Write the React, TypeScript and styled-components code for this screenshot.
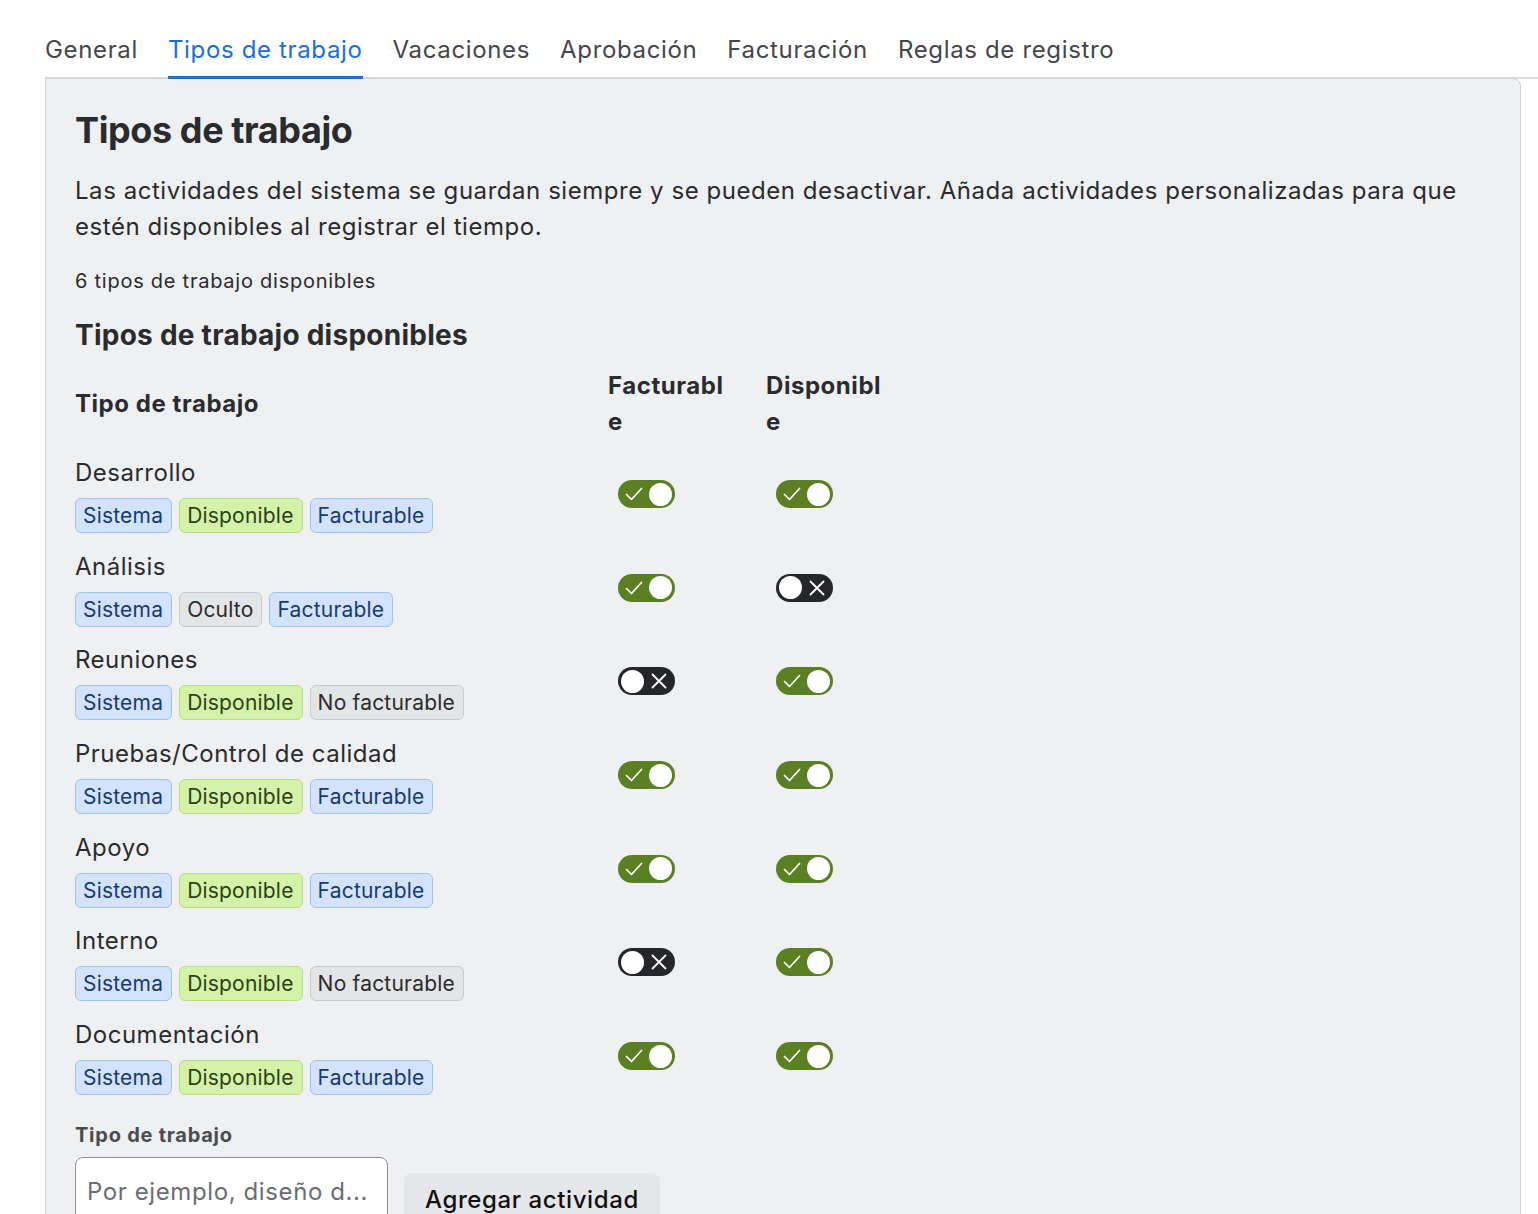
import styled, { createGlobalStyle } from "styled-components";

const GlobalStyle = createGlobalStyle`
    body {
        margin: 0;
        background: #ffffff;
        font-family: Inter, "Noto Sans", sans-serif;
        color: #2a2b2e;
    }
`

type TagKind = 'blue' | 'green' | 'gray'

interface WorkType {
    name: string
    visible: boolean
    billable: boolean
}

const workTypes: WorkType[] = [
    {name: 'Desarrollo', visible: true, billable: true},
    {name: 'Análisis', visible: false, billable: true},
    {name: 'Reuniones', visible: true, billable: false},
    {name: 'Pruebas/Control de calidad', visible: true, billable: true},
    {name: 'Apoyo', visible: true, billable: true},
    {name: 'Interno', visible: true, billable: false},
    {name: 'Documentación', visible: true, billable: true},
]

const tabs = ['General', 'Tipos de trabajo', 'Vacaciones', 'Aprobación', 'Facturación', 'Reglas de registro']

const Toggle = ({on}: { on: boolean }) => (
    <ToggleTrack $on={on}>
        {on ? (
            <>
                <svg width="20" height="20" viewBox="0 0 20 20">
                    <path d="M2.5 10.5 L7.5 15.5 L17.5 4.5" fill="none" stroke="#fff" strokeWidth="1.7"
                          strokeLinecap="round" strokeLinejoin="round"/>
                </svg>
                <Knob/>
            </>
        ) : (
            <>
                <Knob/>
                <svg width="18" height="18" viewBox="0 0 18 18">
                    <path d="M2.5 2.5 L15.5 15.5 M15.5 2.5 L2.5 15.5" fill="none" stroke="#fff"
                          strokeWidth="1.8" strokeLinecap="round"/>
                </svg>
            </>
        )}
    </ToggleTrack>
)

export default function App() {
    return (
        <Page>
            <GlobalStyle/>
            <TabList>
                {tabs.map((t, i) => (
                    <Tab key={t} $active={i === 1}>{t}</Tab>
                ))}
            </TabList>
            <Panel>
                <Title>Tipos de trabajo</Title>
                <Lead>Las actividades del sistema se guardan siempre y se pueden desactivar. Añada actividades
                    personalizadas para que estén disponibles al registrar el tiempo.</Lead>
                <Count>6 tipos de trabajo disponibles</Count>
                <SubTitle>Tipos de trabajo disponibles</SubTitle>
                <Table>
                    <thead>
                    <tr>
                        <NameHead>Tipo de trabajo</NameHead>
                        <FlagHead>Facturable</FlagHead>
                        <FlagHead>Disponible</FlagHead>
                    </tr>
                    </thead>
                    <tbody>
                    {workTypes.map(w => (
                        <tr key={w.name}>
                            <NameCell>
                                <TypeName>{w.name}</TypeName>
                                <TagRow>
                                    <Tag $kind="blue">Sistema</Tag>
                                    {w.visible
                                        ? <Tag $kind="green">Disponible</Tag>
                                        : <Tag $kind="gray">Oculto</Tag>}
                                    {w.billable
                                        ? <Tag $kind="blue">Facturable</Tag>
                                        : <Tag $kind="gray">No facturable</Tag>}
                                </TagRow>
                            </NameCell>
                            <FlagCell><Toggle on={w.billable}/></FlagCell>
                            <FlagCell><Toggle on={w.visible}/></FlagCell>
                        </tr>
                    ))}
                    </tbody>
                </Table>
                <FieldLabel>Tipo de trabajo</FieldLabel>
                <AddRow>
                    <TextInput placeholder="Por ejemplo, diseño d..."/>
                    <AddButton>Agregar actividad</AddButton>
                </AddRow>
            </Panel>
        </Page>
    )
}

const Page = styled.div`
    padding: 32px 0 0 45px;
    overflow: hidden;
`

const TabList = styled.nav`
    display: flex;
    gap: 30px;
    border-bottom: 2px solid #dcdcdf;
`

const Tab = styled.div<{ $active: boolean }>`
    font-size: 24px;
    line-height: 36px;
    letter-spacing: 0.65px;
    padding-bottom: 8px;
    margin-bottom: -2px;
    color: ${p => p.$active ? '#1a6ee0' : '#45464b'};
    border-bottom: 3px solid ${p => p.$active ? '#1a6ee0' : 'transparent'};
`

const Panel = styled.section`
    width: 1476px;
    box-sizing: border-box;
    margin-top: -1px;
    padding: 29px 29px 40px;
    background: #eff0f2;
    border: 1px solid #d2d3d6;
    border-radius: 0 8px 8px 8px;
`

const Title = styled.h2`
    margin: 0;
    font-size: 36px;
    line-height: 44px;
    font-weight: 700;
    letter-spacing: -0.4px;
`

const Lead = styled.p`
    margin: 21px 0 0;
    font-size: 24px;
    line-height: 36px;
    letter-spacing: 0.55px;
`

const Count = styled.p`
    margin: 21px 0 0;
    font-size: 20px;
    line-height: 30px;
    letter-spacing: 0.75px;
`

const SubTitle = styled.h3`
    margin: 21px 0 0;
    font-size: 28px;
    line-height: 36px;
    font-weight: 700;
    letter-spacing: 0.25px;
`

const Table = styled.table`
    margin-top: 15px;
    border-collapse: collapse;
`

const NameHead = styled.th`
    width: 533px;
    padding: 0;
    text-align: left;
    font-size: 24px;
    line-height: 36px;
    font-weight: 700;
    letter-spacing: 0.55px;
`

const FlagHead = styled.th`
    width: 124px;
    padding: 0 34px 0 0;
    text-align: left;
    vertical-align: top;
    font-size: 24px;
    line-height: 36px;
    font-weight: 700;
    letter-spacing: 0.55px;
    word-break: break-all;
`

const NameCell = styled.td`
    padding: 15px 0 0.7px;
    vertical-align: top;
`

const FlagCell = styled.td`
    padding: 15px 0 0.7px 10px;
    vertical-align: middle;
`

const TypeName = styled.div`
    font-size: 24px;
    line-height: 36px;
    letter-spacing: 0.5px;
`

const TagRow = styled.div`
    display: flex;
    gap: 7px;
    margin-top: 7px;
`

const tagColors: Record<TagKind, { bg: string, border: string, fg: string }> = {
    blue: {bg: '#d3e3fd', border: '#9fc2f5', fg: '#173a70'},
    green: {bg: '#d4f2a8', border: '#b7e07e', fg: '#2c3f14'},
    gray: {bg: '#e4e5e7', border: '#c9cacd', fg: '#2a2b2e'},
}

const Tag = styled.span<{ $kind: TagKind }>`
    display: inline-flex;
    align-items: center;
    height: 35px;
    box-sizing: border-box;
    padding: 0 8px 0 7px;
    font-size: 21px;
    letter-spacing: 0.2px;
    border-radius: 6px;
    background: ${p => tagColors[p.$kind].bg};
    border: 1px solid ${p => tagColors[p.$kind].border};
    color: ${p => tagColors[p.$kind].fg};
`

const ToggleTrack = styled.div<{ $on: boolean }>`
    width: 57px;
    height: 28px;
    box-sizing: border-box;
    border-radius: 14px;
    background: ${p => p.$on ? '#5b7f23' : '#25262a'};
    display: flex;
    align-items: center;
    justify-content: space-between;
    padding-left: ${p => p.$on ? '6px' : '3px'};
    padding-right: ${p => p.$on ? '3px' : '7px'};
`

const Knob = styled.span`
    width: 23px;
    height: 23px;
    border-radius: 50%;
    background: #ffffff;
`

const FieldLabel = styled.div`
    margin-top: 25px;
    font-size: 20px;
    line-height: 28px;
    font-weight: 700;
    letter-spacing: 0.75px;
    color: #4a4b50;
`

const AddRow = styled.div`
    display: flex;
    align-items: flex-end;
    gap: 16px;
    margin-top: 8px;
`

const TextInput = styled.input`
    width: 313px;
    height: 70px;
    box-sizing: border-box;
    padding: 0 11px;
    font-family: Inter, "Noto Sans", sans-serif;
    font-size: 24px;
    letter-spacing: 0.6px;
    border: 1px solid #8e8f94;
    border-radius: 8px;
    background: #ffffff;
    color: #2a2b2e;

    &::placeholder {
        color: #6b6c71;
    }
`

const AddButton = styled.button`
    height: 54px;
    padding: 0 21px;
    font-family: Inter, "Noto Sans", sans-serif;
    font-size: 24px;
    font-weight: 500;
    letter-spacing: 0.6px;
    color: #111113;
    background: #e6e7ea;
    border: none;
    border-radius: 8px;
`
